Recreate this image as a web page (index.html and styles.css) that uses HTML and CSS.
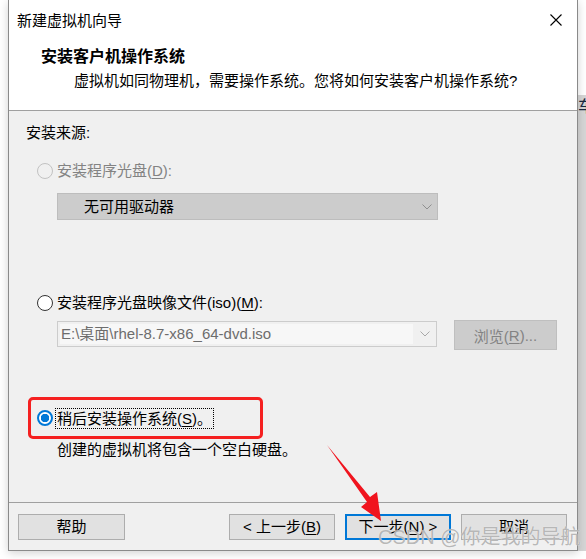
FILE: index.html
```html
<!DOCTYPE html>
<html lang="zh-CN">
<head>
<meta charset="utf-8">
<title>新建虚拟机向导</title>
<link rel="stylesheet" href="styles.css">
</head>
<body>
<div class="page">
  <div class="window">
    <div class="top">
      <div class="titlebar">
        <span class="title">新建虚拟机向导</span>
        <svg class="close" width="12" height="12" viewBox="0 0 12 12"><path d="M0.5 0.5 L11.5 11.5 M11.5 0.5 L0.5 11.5" stroke="#000" stroke-width="1.1" fill="none"/></svg>
      </div>
      <div class="head-title">安装客户机操作系统</div>
      <div class="head-sub">虚拟机如同物理机，需要操作系统。您将如何安装客户机操作系统?</div>
    </div>
    <div class="body">
      <div class="line src">安装来源:</div>
      <div class="line radio-row disabled">
        <span class="radio radio-off-dis"></span>
        <span>安装程序光盘(<u>D</u>):</span>
      </div>
      <div class="select-dis">
        <span>无可用驱动器</span>
        <svg class="chev" width="10" height="6" viewBox="0 0 10 6"><path d="M0.5 0.5 L5 5 L9.5 0.5" stroke="#8f8f8f" fill="none" stroke-width="1"/></svg>
      </div>
      <div class="line radio-row row2">
        <span class="radio radio-off"></span>
        <span>安装程序光盘映像文件(iso)(<u>M</u>):</span>
      </div>
      <div class="iso-row">
        <div class="combo">
          <span class="combo-field">E:\桌面\rhel-8.7-x86_64-dvd.iso</span>
          <svg class="chev" width="10" height="6" viewBox="0 0 10 6"><path d="M0.5 0.5 L5 5 L9.5 0.5" stroke="#a8a8a8" fill="none" stroke-width="1"/></svg>
        </div>
        <div class="browse">浏览(<u>R</u>)...</div>
      </div>
      <div class="line radio-row row3">
        <span class="radio radio-on"></span>
        <span class="focus">稍后安装操作系统(<u>S</u>)。</span>
      </div>
      <div class="line desc">创建的虚拟机将包含一个空白硬盘。</div>
      <div class="highlight"></div>
    </div>
    <div class="footer">
      <div class="btn">帮助</div>
      <div class="spacer"></div>
      <div class="btn">&lt; 上一步(<u>B</u>)</div>
      <div class="btn primary">下一步(<u>N</u>) &gt;</div>
      <div class="btn">取消</div>
    </div>
  </div>
  <div class="side"><span class="side-char">车</span></div>
</div>
<svg class="arrow" width="586" height="559" viewBox="0 0 586 559">
  <polygon points="327,445 370,497 377,492 381,521 361,507 367,502" fill="#f0141e"/>
</svg>
<div class="watermark">CSDN @你是我的导航</div>
</body>
</html>
```

FILE: styles.css
```css
* { box-sizing: border-box; }
html, body {
  margin: 0;
  padding: 0;
  background: #ffffff;
  width: 586px;
  height: 559px;
  overflow: hidden;
  font-family: "Liberation Sans", "Noto Sans CJK SC", sans-serif;
  font-size: 15px;
  color: #000;
}
.page {
  display: flex;
  padding-left: 8px;
  position: relative;
}
.window {
  width: 570px;
  height: 551px;
  border: 1px solid #8a8a8a;
  border-top: none;
  background: #f0f0f0;
  display: flex;
  flex-direction: column;
  box-shadow: 0 2px 9px rgba(0,0,0,0.18);
  position: relative;
  z-index: 1;
}
.top {
  background: #ffffff;
  height: 111px;
  border-bottom: 1px solid #a0a0a0;
  display: flex;
  flex-direction: column;
}
.titlebar {
  height: 39px;
  display: flex;
  align-items: center;
  justify-content: space-between;
  padding-left: 8px;
  padding-right: 15px;
}
.title { line-height: 20px; margin-top: 2px; }
.close { display: block; }
.head-title {
  font-weight: bold;
  font-size: 16px;
  line-height: 20px;
  margin-top: 8px;
  padding-left: 32px;
}
.head-sub {
  line-height: 20px;
  margin-top: 4px;
  padding-left: 65px;
}
.body {
  flex: 1;
  display: flex;
  flex-direction: column;
  padding-left: 17px;
  position: relative;
}
.line { line-height: 20px; height: 20px; }
.src { margin-top: 12px; }
.radio-row {
  display: flex;
  align-items: center;
  gap: 4px;
  margin-left: 11px;
  margin-top: 18px;
}
.disabled { color: #838383; }
.radio {
  width: 16px;
  height: 16px;
  border-radius: 50%;
  flex: none;
}
.radio-off-dis { border: 1px solid #c2c2c2; background: #f0f0f0; }
.radio-off { border: 1px solid #333333; background: #ffffff; }
.radio-on {
  border: 2px solid #0078d7;
  background: radial-gradient(circle, #0078d7 0 4px, #ffffff 4.5px);
}
.select-dis {
  margin-left: 31px;
  margin-top: 12px;
  width: 381px;
  height: 27px;
  background: #cccccc;
  border: 1px solid #bdbdbd;
  display: flex;
  align-items: center;
  justify-content: space-between;
  padding-left: 26px;
  padding-right: 5px;
  line-height: 20px;
}
.chev { display: block; }
.row2 { margin-top: 73px; }
.iso-row {
  margin-left: 31px;
  margin-top: 7px;
  height: 30px;
  display: flex;
  align-items: flex-start;
  gap: 17px;
}
.combo {
  margin-top: 1px;
  width: 380px;
  height: 26px;
  border: 1px solid #cccccc;
  background: #f0f0f0;
  display: flex;
  align-items: center;
  justify-content: space-between;
  padding: 2px 6px 2px 2px;
}
.combo-field {
  background: #f7f7f7;
  width: 353px;
  height: 20px;
  line-height: 20px;
  padding-left: 1px;
  color: #6d6d6d;
}
.browse {
  width: 103px;
  height: 30px;
  background: #cccccc;
  border: 1px solid #bfbfbf;
  color: #838383;
  display: flex;
  align-items: center;
  justify-content: center;
}
.row3 { margin-top: 58px; }
.focus {
  outline: 1px dotted #000;
  outline-offset: 0px;
  padding: 0 1px;
  height: 19px;
  line-height: 19px;
  margin-left: -1px;
}
.desc { margin-left: 31px; margin-top: 12px; }
.highlight {
  position: absolute;
  left: 19px;
  top: 286px;
  width: 235px;
  height: 42px;
  border: 3px solid #f52020;
  border-radius: 5px;
}
.footer {
  height: 48px;
  border-top: 1px solid #a0a0a0;
  display: flex;
  align-items: flex-start;
  padding: 11px 10px 0 9px;
  gap: 10px;
}
.spacer { flex: 1; }
.btn {
  width: 106px;
  height: 26px;
  background: #e1e1e1;
  border: 1px solid #adadad;
  display: flex;
  align-items: center;
  justify-content: center;
  line-height: 20px;
}
.footer .btn:first-child { width: 107px; }
.btn.primary { border: 2px solid #0078d7; }
.side {
  flex: 1;
  margin-top: 95px;
  height: 456px;
  background: #d6d6d6;
  overflow: hidden;
  position: relative;
}
.side-char {
  position: absolute;
  left: 0px;
  top: 2px;
  font-size: 16px;
  line-height: 20px;
  color: #1a2a40;
}
.arrow {
  position: absolute;
  left: 0;
  top: 0;
  z-index: 2;
  pointer-events: none;
}
.watermark {
  position: absolute;
  left: 378px;
  top: 524px;
  z-index: 3;
  font-size: 20px;
  line-height: 26px;
  color: rgba(165,165,165,0.8);
  text-shadow: 0 0 1px rgba(255,255,255,0.9);
  white-space: nowrap;
}
u { text-decoration-thickness: 1px; text-underline-offset: 2px; }
```
